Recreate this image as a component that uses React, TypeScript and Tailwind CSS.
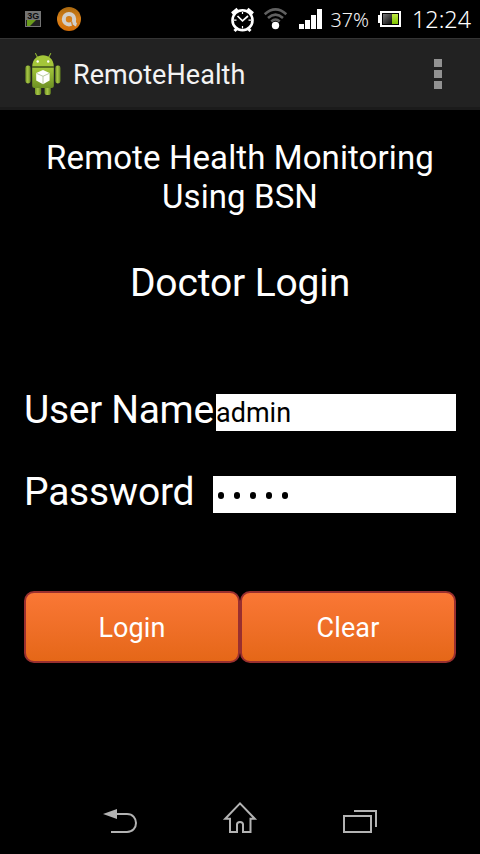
import React from "react";

function StatusBar() {
  return (
    <header className="flex h-[38px] shrink-0 items-center bg-black text-white">
      <svg width="480" height="38" viewBox="0 0 480 38" className="block">
        <defs>
          <linearGradient id="avast" x1="0" y1="0" x2="0" y2="1">
            <stop offset="0" stopColor="#a8680f" />
            <stop offset="0.5" stopColor="#d9811a" />
            <stop offset="1" stopColor="#d06c08" />
          </linearGradient>
          <linearGradient id="battery" x1="0" y1="0" x2="1" y2="1">
            <stop offset="0" stopColor="#777" />
            <stop offset="1" stopColor="#0a0a0a" />
          </linearGradient>
          <linearGradient id="charge" x1="0" y1="0" x2="0" y2="1">
            <stop offset="0" stopColor="#c0e846" />
            <stop offset="1" stopColor="#80c400" />
          </linearGradient>
        </defs>
        <rect x="25" y="11" width="16" height="16" fill="#747474" />
        <rect x="26" y="20" width="14" height="6" fill="#222" />
        <path d="M27 20H36L30 26H27Z" fill="#6b9c1c" />
        <text x="33.2" y="18.6" textAnchor="middle" fontSize="9" fontWeight="700" fontFamily="Liberation Sans, sans-serif" fill="#0b0b0b">3G</text>
        <circle cx="69" cy="19" r="12" fill="url(#avast)" />
        <circle cx="69" cy="19.2" r="5.2" fill="none" stroke="#d2cfca" strokeWidth="4" />
        <path d="M74.2 19V21.8Q74.3 24.2 76.5 24.8" fill="none" stroke="#d2cfca" strokeWidth="3.6" />
        <path d="M71.6 21.5Q72 25.5 73.5 26.8" fill="none" stroke="#cc7212" strokeWidth="1.2" />

        <g fill="none" stroke="#fff">
          <circle cx="242.5" cy="20.2" r="10" strokeWidth="2.6" />
          <path d="M232 13.5L237.5 9M253 13.5L247.5 9" strokeWidth="3" />
          <path d="M234.5 31L237 28.5M250.5 31L248 28.5" strokeWidth="3" />
          <path d="M237.5 16L242.5 20.8L248 16" strokeWidth="1.7" />
          <path d="M242.5 12V14M242.5 26V28.5M234 20.2H236.5M248.5 20.2H251" strokeWidth="1.2" />
        </g>
        <g fill="none" stroke="#606060" strokeWidth="2.6">
          <path d="M264.7 14.3Q275.5 4.6 286.3 14.3" />
          <path d="M268 18Q275.5 11.3 283 18" />
          <path d="M271.3 21.5Q275.5 17.5 279.7 21.5" />
        </g>
        <circle cx="275.5" cy="25.5" r="3.7" fill="#fff" />
        <g fill="#fff">
          <rect x="299" y="24" width="5" height="5" />
          <rect x="305" y="20" width="5" height="9" />
          <rect x="311" y="15" width="5" height="14" />
          <rect x="317" y="9" width="5" height="20" />
        </g>
        <text x="330.5" y="27" fontSize="20" textLength="38.5" lengthAdjust="spacingAndGlyphs" fontFamily="Noto Sans, sans-serif" fontWeight="350" fill="#f4f4f4">37%</text>
        <rect x="381" y="12" width="19" height="14" fill="#000" stroke="#fff" strokeWidth="2" />
        <rect x="378" y="15" width="3" height="8" fill="#fff" />
        <rect x="383" y="14" width="9" height="10" fill="url(#battery)" />
        <rect x="392" y="14" width="6" height="10" fill="url(#charge)" />
        <text x="412" y="27.5" fontSize="23" textLength="59" lengthAdjust="spacingAndGlyphs" fontFamily="Noto Sans, sans-serif" fontWeight="350" fill="#fff">12:24</text>
      </svg>
    </header>
  );
}

function RobotIcon() {
  return (
    <svg width="36" height="44" viewBox="25 52 36 44" className="block shrink-0">
      <defs>
        <linearGradient id="robot" x1="0" y1="0" x2="0" y2="1">
          <stop offset="0" stopColor="#a5c83b" />
          <stop offset="1" stopColor="#6d9023" />
        </linearGradient>
        <linearGradient id="limb" x1="0" y1="0" x2="1" y2="0">
          <stop offset="0" stopColor="#739626" />
          <stop offset="0.45" stopColor="#a7c546" />
          <stop offset="1" stopColor="#64841f" />
        </linearGradient>
      </defs>
      <path d="M37.6 57.5L35.5 53.5M48.6 57.5L50.7 53.5" stroke="#8aae31" strokeWidth="1.1" strokeLinecap="round" />
      <rect x="25.4" y="65.5" width="5.2" height="18" rx="2.4" fill="url(#limb)" />
      <rect x="55.3" y="65.5" width="5.2" height="18" rx="2.4" fill="url(#limb)" />
      <rect x="35" y="84" width="6.2" height="11" rx="2.6" fill="url(#limb)" />
      <rect x="44.6" y="84" width="6.2" height="11" rx="2.6" fill="url(#limb)" />
      <path d="M32.2 67.5H53.8V86Q53.8 88 51.5 88H34.5Q32.2 88 32.2 86Z" fill="url(#robot)" />
      <path d="M32.2 66.4C32.5 51.5 53.5 51.5 53.8 66.4Z" fill="#a4c639" />
      <path d="M32.2 67H53.8" stroke="#4d6817" strokeWidth="1" />
      <circle cx="37.7" cy="61.5" r="1.2" fill="#fff" />
      <circle cx="48.2" cy="61.5" r="1.2" fill="#fff" />
      <path d="M43 70L49.6 73V80.5L43 84.2L36.2 80.5V73Z" fill="#fff" />
      <path d="M36.5 73.3L43 76.3L49.4 73.3M43 76.3V84" fill="none" stroke="#a8bd88" strokeWidth="0.8" />
    </svg>
  );
}

function ActionBar() {
  return (
    <div className="flex h-[72px] shrink-0 items-center border-t border-b-[3px] border-t-[#343434] border-b-[#1b1b1b] bg-[#222] pl-[25px] pr-[38px] pt-[2px]">
      <RobotIcon />
      <h1 className="ml-3 mt-[2px] whitespace-nowrap text-[27px] leading-8 tracking-[0.05px] text-[#f3f3f3]">RemoteHealth</h1>
      <button aria-label="More options" className="ml-auto flex flex-col gap-[3px]">
        <span className="size-2 bg-[#929292]" />
        <span className="size-2 bg-[#929292]" />
        <span className="size-2 bg-[#929292]" />
      </button>
    </div>
  );
}

function ActionButton({ label }: { label: string }) {
  return (
    <button className="h-[72px] flex-1 rounded-[10px] border-2 border-[#992f2f] bg-linear-to-b from-[#fa7735] to-[#e56717] pt-[2px] text-[27px] tracking-[0.1px] text-white">
      {label}
    </button>
  );
}

function NavigationBar() {
  return (
    <nav className="mt-auto flex h-[72px] shrink-0 bg-black">
      <svg width="480" height="72" viewBox="0 782 480 72" fill="none" stroke="#b3b3b3" strokeWidth="2">
        <path d="M111 832H127C139 832 139 814 127 814H115" />
        <path d="M103 814L117 809V819Z" fill="#b3b3b3" stroke="none" />
        <path d="M240 803.4L225.2 818.8H230V832H237V824.5Q237 822 240 822Q243 822 243 824.5V832H250.5V818.8H254.8Z" />
        <rect x="344" y="816" width="27" height="16" />
        <path d="M354 811H376V827" />
      </svg>
    </nav>
  );
}

export default function App() {
  return (
    <div className="flex h-[854px] w-[480px] flex-col overflow-hidden bg-black font-['Roboto',sans-serif] text-white">
      <StatusBar />
      <ActionBar />
      <main className="flex flex-col px-6 pt-7">
        <h2 className="whitespace-nowrap text-center text-[33px] leading-[39px] tracking-[0.1px]">
          Remote Health Monitoring
          <br />
          Using BSN
        </h2>
        <h3 className="mt-11 text-center text-[39px] leading-[46px] tracking-[-0.15px]">Doctor Login</h3>
        <form className="mt-[81px] flex flex-col">
          <div className="flex h-[46px] items-start">
            <label className="w-48 whitespace-nowrap text-[39px] leading-[46px] tracking-[-0.35px]">User Name</label>
            <div className="mt-[7px] h-[37px] flex-1 bg-white text-[27px] leading-[39px] text-black">admin</div>
          </div>
          <div className="mt-9 flex h-[46px] items-start">
            <label className="w-[189px] whitespace-nowrap text-[39px] leading-[46px] tracking-[-0.25px]">Password</label>
            <div className="mt-[7px] flex h-[37px] flex-1 items-center gap-[10px] bg-white pl-[5px] pt-[2px]">
              {[0, 1, 2, 3, 4].map((dot) => (
                <span key={dot} className="h-[7px] w-[6px] rounded-full bg-black" />
              ))}
            </div>
          </div>
          <div className="mt-[76px] flex">
            <ActionButton label="Login" />
            <ActionButton label="Clear" />
          </div>
        </form>
      </main>
      <NavigationBar />
    </div>
  );
}
